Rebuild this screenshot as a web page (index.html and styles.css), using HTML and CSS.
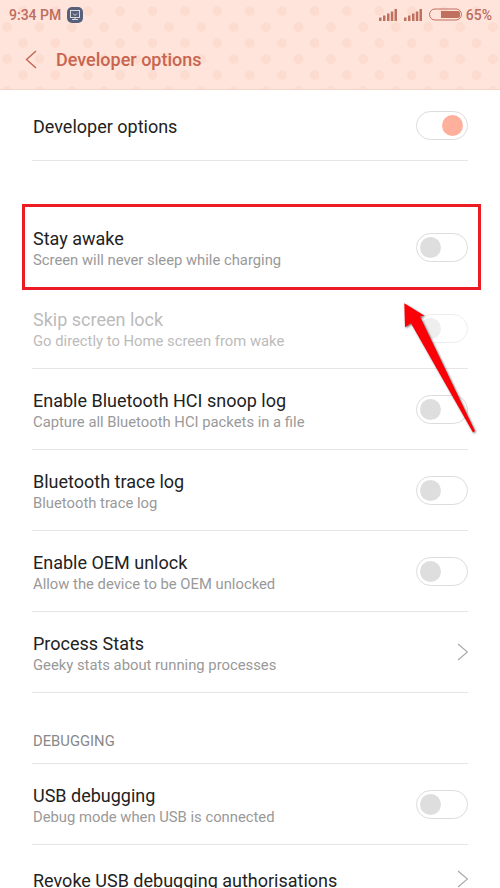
FILE: index.html
```html
<!DOCTYPE html>
<html lang="en">
<head>
    <meta charset="UTF-8">
    <meta name="viewport" content="width=device-width, initial-scale=1.0">
    <title>Developer options</title>
    <link rel="stylesheet" href="styles.css">
</head>
<body>
    <div class="screen">
        <!-- Status bar and title share the dotted background -->
        <header class="header">
            <div class="status-bar">
                <span class="status-time">9:34 PM</span>
                <svg class="status-shot" width="16" height="16" viewBox="0 0 16 16">
                    <rect width="16" height="16" rx="5" fill="#56607a"/>
                    <rect x="3.5" y="3.5" width="9" height="7" fill="none" stroke="#dcdad8" stroke-width="1"/>
                    <path d="M6 6.5l2 2l2-2M8 10.5v1.5M5 12.5h6" fill="none" stroke="#dcdad8" stroke-width="1"/>
                </svg>
                <span class="status-spacer"></span>
                <svg class="status-signal" width="18" height="12" viewBox="0 0 18 12">
                    <path d="M0 8.5h2.5V12H0zM4 6.5h2.5V12H4zM8 4.5h2.5V12H8zM11.8 2.5h2.5V12h-2.5zM15.5 0H18v12h-2.5z" fill="#c0705f"/>
                </svg>
                <svg class="status-signal" width="18" height="12" viewBox="0 0 18 12">
                    <path d="M0 8.5h2.5V12H0zM4 6.5h2.5V12H4zM8 4.5h2.5V12H8zM11.8 2.5h2.5V12h-2.5zM15.5 0H18v12h-2.5z" fill="#c0705f"/>
                </svg>
                <svg class="status-battery" width="33" height="13" viewBox="0 0 33 13">
                    <rect x="0.5" y="1" width="32" height="11" rx="5.5" fill="none" stroke="#c0705f" stroke-width="1"/>
                    <path d="M12 3h17a2 2 0 0 1 2 2v3a2 2 0 0 1-2 2H12z" fill="#c0705f"/>
                </svg>
                <span class="status-percent">65%</span>
            </div>
            <div class="title-bar">
                <svg class="back-icon" width="12" height="19" viewBox="0 0 12 19">
                    <path d="M11 1L1.5 9.5L11 18" fill="none" stroke="#c8644f" stroke-width="1.4"/>
                </svg>
                <h1 class="title">Developer options</h1>
            </div>
        </header>

        <div class="row row-first">
            <div class="row-text row-text-single"><div class="row-name">Developer options</div></div>
            <div class="toggle toggle-on"><span class="knob"></span></div>
        </div>

        <div class="row row-gap">
            <div class="row-text">
                <div class="row-name">Stay awake</div>
                <div class="row-desc">Screen will never sleep while charging</div>
            </div>
            <div class="toggle"><span class="knob"></span></div>
            <!-- Annotation box around this row -->
            <div class="callout"></div>
        </div>

        <div class="row row-disabled">
            <div class="row-text">
                <div class="row-name">Skip screen lock</div>
                <div class="row-desc">Go directly to Home screen from wake</div>
            </div>
            <div class="toggle"><span class="knob"></span></div>
        </div>

        <div class="row">
            <div class="row-text">
                <div class="row-name">Enable Bluetooth HCI snoop log</div>
                <div class="row-desc">Capture all Bluetooth HCI packets in a file</div>
            </div>
            <div class="toggle"><span class="knob"></span></div>
        </div>

        <div class="row">
            <div class="row-text">
                <div class="row-name">Bluetooth trace log</div>
                <div class="row-desc">Bluetooth trace log</div>
            </div>
            <div class="toggle"><span class="knob"></span></div>
        </div>

        <div class="row">
            <div class="row-text">
                <div class="row-name">Enable OEM unlock</div>
                <div class="row-desc">Allow the device to be OEM unlocked</div>
            </div>
            <div class="toggle"><span class="knob"></span></div>
        </div>

        <div class="row">
            <div class="row-text">
                <div class="row-name">Process Stats</div>
                <div class="row-desc">Geeky stats about running processes</div>
            </div>
            <svg class="chevron" width="11" height="18" viewBox="0 0 11 18">
                <path d="M1 1l9.5 8l-9.5 8" fill="none" stroke="#a8a8a8" stroke-width="1.2"/>
            </svg>
        </div>

        <div class="section-label">DEBUGGING</div>

        <div class="row">
            <div class="row-text">
                <div class="row-name">USB debugging</div>
                <div class="row-desc">Debug mode when USB is connected</div>
            </div>
            <div class="toggle"><span class="knob"></span></div>
        </div>

        <div class="row row-single">
            <div class="row-text row-text-single"><div class="row-name">Revoke USB debugging authorisations</div></div>
            <svg class="chevron" width="11" height="18" viewBox="0 0 11 18">
                <path d="M1 1l9.5 8l-9.5 8" fill="none" stroke="#a8a8a8" stroke-width="1.2"/>
            </svg>
        </div>

        <!-- Red arrow pointing at the box -->
        <svg class="arrow" width="80" height="140" viewBox="0 0 80 140">
            <path d="M4.3 3.3L24.5 15.7L20 16.5L75 131L73 132.5L11 23.3L5 27.3Z" fill="#fb0007"/>
        </svg>
    </div>
</body>
</html>
```

FILE: styles.css
```css
* {
    box-sizing: border-box;
}
body {
    margin: 0;
    background-color: #fff;
    font-family: 'Roboto', sans-serif;
}
.screen {
    position: relative;
    width: 500px;
    height: 888px;
    overflow: hidden;
}
.header {
    height: 90px;
    border-bottom: 1px solid #f8d5c9;
    background-color: #fee4da;
    background-image:
        radial-gradient(circle at 23px 11px, #fddbcf 4.5px, transparent 5px),
        radial-gradient(circle at 7px 27px, #fddbcf 4.5px, transparent 5px);
    background-size: 32.4px 32px;
}
.status-bar {
    display: flex;
    align-items: center;
    height: 29px;
    padding: 0 8px 0 9px;
    color: #bd6d5f;
    font-size: 14px;
    font-weight: 500;
}
.status-shot {
    margin-left: 6px;
}
.status-spacer {
    flex: 1;
}
.status-signal {
    margin-right: 7px;
}
.status-percent {
    margin-left: 4px;
}
.title-bar {
    display: flex;
    align-items: center;
    height: 60px;
    padding-left: 25px;
}
.title {
    margin: 0 0 0 19px;
    color: #c8644f;
    font-size: 18px;
    font-weight: 500;
}
.row {
    position: relative;
    display: flex;
    align-items: center;
    justify-content: space-between;
    height: 81px;
    margin: 0 32px;
    border-bottom: 1px solid #e6e6e6;
}
.row-first {
    height: 71px;
}
.row-gap {
    margin-top: 46px;
}
.row-single {
    height: 69px;
}
.row-text {
    padding: 4px 0 0 1px;
}
.row-text-single {
    padding-top: 4px;
}
.row-name {
    color: #222;
    font-size: 18px;
    line-height: 22px;
}
.row-desc {
    color: #999;
    font-size: 14.8px;
    line-height: 20px;
}
.row-disabled .row-name,
.row-disabled .row-desc {
    color: #bbb;
}
.row-disabled .toggle {
    opacity: 0.5;
}
.toggle {
    display: flex;
    align-items: center;
    width: 52px;
    height: 29px;
    padding: 0 3px;
    border: 1px solid #dcdcdc;
    border-radius: 15px;
    background-color: #fff;
}
.toggle-on {
    justify-content: flex-end;
    padding-right: 4px;
}
.knob {
    width: 21px;
    height: 21px;
    border-radius: 50%;
    background-color: #dedede;
}
.toggle-on .knob {
    background-color: #ffb09c;
}
.section-label {
    display: flex;
    align-items: flex-end;
    height: 71px;
    margin: 0 32px;
    padding: 0 0 13px 1px;
    border-bottom: 1px solid #e6e6e6;
    color: #888;
    font-size: 14.8px;
}
.callout {
    position: absolute;
    top: -3px;
    left: -10px;
    right: -13px;
    bottom: -3px;
    border: 3px solid #ed1c24;
}
.arrow {
    position: absolute;
    top: 300px;
    left: 400px;
    filter: drop-shadow(1px 1px 1px rgba(0, 0, 0, 0.55));
}
```
